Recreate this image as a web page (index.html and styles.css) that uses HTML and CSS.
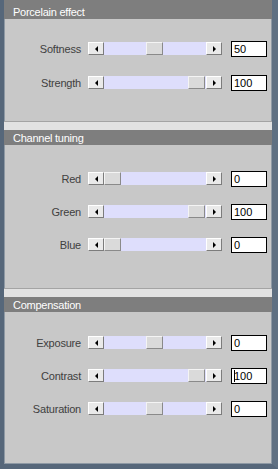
FILE: index.html
```html
<html lang="en"><head>
    <meta charset="UTF-8">
    <title>Porcelain</title>
    <link rel="stylesheet" href="styles.css">
</head>
<body>
    <div class="panel">
        <div class="group-title first">Porcelain effect</div>
        <div class="group-body body-effect">
            <div class="row">
                <span class="label">Softness</span>
                <div class="slider">
                    <div class="arrow-btn"><span class="tri-left"></span></div>
                    <div class="track"><div class="thumb" style="left: 42px"></div></div>
                    <div class="arrow-btn"><span class="tri-right"></span></div>
                </div>
                <div class="value">50</div>
            </div>
            <div class="row">
                <span class="label">Strength</span>
                <div class="slider">
                    <div class="arrow-btn"><span class="tri-left"></span></div>
                    <div class="track"><div class="thumb" style="left: 84px"></div></div>
                    <div class="arrow-btn"><span class="tri-right"></span></div>
                </div>
                <div class="value">100</div>
            </div>
        </div>

        <div class="separator"></div>
        <div class="group-title">Channel tuning</div>
        <div class="group-body body-channel">
            <div class="row">
                <span class="label">Red</span>
                <div class="slider">
                    <div class="arrow-btn"><span class="tri-left"></span></div>
                    <div class="track"><div class="thumb" style="left: 0px"></div></div>
                    <div class="arrow-btn"><span class="tri-right"></span></div>
                </div>
                <div class="value">0</div>
            </div>
            <div class="row">
                <span class="label">Green</span>
                <div class="slider">
                    <div class="arrow-btn"><span class="tri-left"></span></div>
                    <div class="track"><div class="thumb" style="left: 84px"></div></div>
                    <div class="arrow-btn"><span class="tri-right"></span></div>
                </div>
                <div class="value">100</div>
            </div>
            <div class="row">
                <span class="label">Blue</span>
                <div class="slider">
                    <div class="arrow-btn"><span class="tri-left"></span></div>
                    <div class="track"><div class="thumb" style="left: 0px"></div></div>
                    <div class="arrow-btn"><span class="tri-right"></span></div>
                </div>
                <div class="value">0</div>
            </div>
        </div>

        <div class="separator"></div>
        <div class="group-title">Compensation</div>
        <div class="group-body body-comp">
            <div class="row">
                <span class="label">Exposure</span>
                <div class="slider">
                    <div class="arrow-btn"><span class="tri-left"></span></div>
                    <div class="track"><div class="thumb" style="left: 42px"></div></div>
                    <div class="arrow-btn"><span class="tri-right"></span></div>
                </div>
                <div class="value">0</div>
            </div>
            <div class="row">
                <span class="label">Contrast</span>
                <div class="slider">
                    <div class="arrow-btn"><span class="tri-left"></span></div>
                    <div class="track"><div class="thumb" style="left: 84px"></div></div>
                    <div class="arrow-btn"><span class="tri-right"></span></div>
                </div>
                <div class="value"><span class="caret"></span>100</div>
            </div>
            <div class="row">
                <span class="label">Saturation</span>
                <div class="slider">
                    <div class="arrow-btn"><span class="tri-left"></span></div>
                    <div class="track"><div class="thumb" style="left: 42px"></div></div>
                    <div class="arrow-btn"><span class="tri-right"></span></div>
                </div>
                <div class="value">0</div>
            </div>
        </div>
    </div>
</body></html>
```

FILE: styles.css
```css
body {
    margin: 0;
    font-family: 'Liberation Sans', Arial, sans-serif;
    font-size: 11px;
    background-color: #c8c8c8;
}
.panel {
    width: 278px;
    height: 469px;
    box-sizing: border-box;
    display: flex;
    flex-direction: column;
    background-color: #c8c8c8;
    border-left: 4px solid #56677a;
    border-right: 6px solid #5f7082;
    border-bottom: 5px solid #56677a;
    box-shadow: inset 1px 0 0 #8e99a4, inset -1px 0 0 #8e99a4, inset 0 -1px 0 #8e99a4;
}
.group-title {
    height: 15px;
    box-sizing: border-box;
    padding: 1px 0 0 9px;
    line-height: 14px;
    background-color: #7e7e7e;
    color: #ffffff;
    letter-spacing: -0.25px;
}
.group-title.first {
    height: 19px;
    padding-top: 5px;
}
.separator {
    height: 8px;
    background-color: #e2e2e2;
    border-top: 1px solid #a4a4a4;
}
.group-body {
    display: flex;
    flex-direction: column;
    gap: 17px;
    box-sizing: border-box;
}
.body-effect {
    height: 102px;
    padding-top: 22px;
    gap: 18px;
}
.body-channel {
    height: 143px;
    padding-top: 26px;
}
.body-comp {
    flex: 1;
    padding-top: 23px;
}
.row {
    display: flex;
    align-items: center;
    height: 16px;
}
.label {
    width: 77px;
    margin-right: 7px;
    text-align: right;
    color: #404040;
    letter-spacing: -0.2px;
}
.slider {
    display: flex;
    height: 13px;
    margin-top: -1px;
}
.arrow-btn {
    width: 16px;
    height: 13px;
    box-sizing: border-box;
    background-color: #eaeaea;
    border-top: 1px solid #ffffff;
    border-left: 1px solid #ffffff;
    border-right: 1px solid #7c7c7c;
    border-bottom: 1px solid #7c7c7c;
    display: flex;
    align-items: center;
    justify-content: center;
}
.tri-left {
    width: 0;
    height: 0;
    border-top: 3px solid transparent;
    border-bottom: 3px solid transparent;
    border-right: 3px solid #000;
}
.tri-right {
    width: 0;
    height: 0;
    border-top: 3px solid transparent;
    border-bottom: 3px solid transparent;
    border-left: 3px solid #000;
}
.track {
    position: relative;
    width: 102px;
    height: 13px;
    background-color: #dedefc;
}
.thumb {
    position: absolute;
    top: 0;
    width: 17px;
    height: 13px;
    box-sizing: border-box;
    background-color: #dadada;
    border-top: 1px solid #f4f4f4;
    border-left: 1px solid #f4f4f4;
    border-right: 1px solid #8a8a8a;
    border-bottom: 1px solid #8a8a8a;
}
.value {
    width: 36px;
    height: 16px;
    margin-left: 9px;
    box-sizing: border-box;
    border: 1px solid #000;
    background-color: #ffffff;
    padding-left: 2px;
    line-height: 14px;
    color: #000;
    display: flex;
    align-items: center;
}
.caret {
    width: 1px;
    height: 12px;
    background-color: #000;
    margin-right: -1px;
}
```
